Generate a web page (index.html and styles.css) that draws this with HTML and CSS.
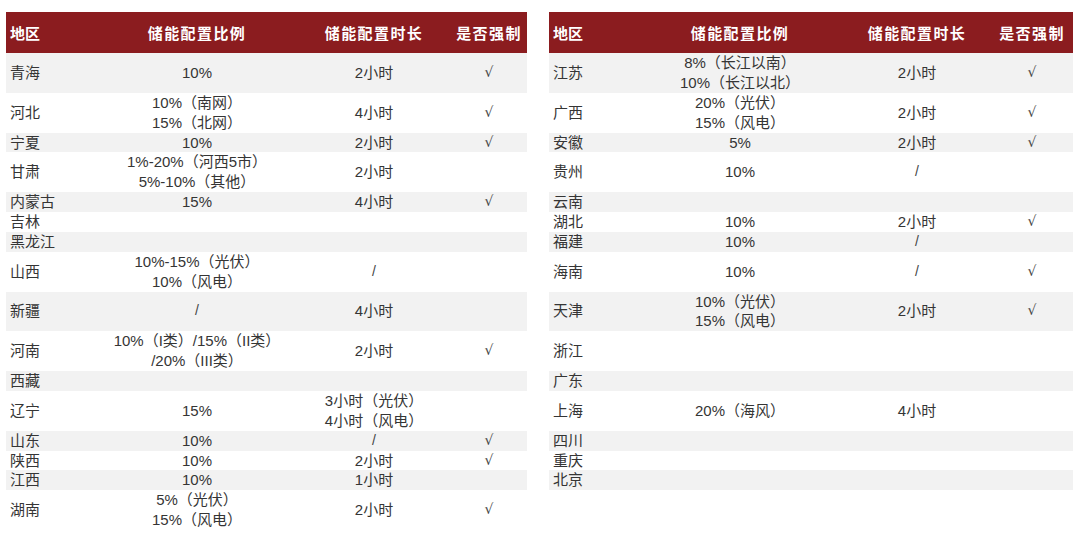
FILE: index.html
```html
<!DOCTYPE html>
<html lang="zh-CN">
<head>
<meta charset="utf-8">
<title>储能配置</title>
<link rel="stylesheet" href="styles.css">
</head>
<body>
<div class="page">
  <table class="tbl tbl-left">
    <colgroup>
      <col class="lc1"><col class="lc2"><col class="lc3"><col class="lc4">
    </colgroup>
    <thead>
      <tr><th class="first">地区</th><th>储能配置比例</th><th>储能配置时长</th><th>是否强制</th></tr>
    </thead>
    <tbody>
      <tr class="t"><td class="first">青海</td><td>10%</td><td>2小时</td><td class="ck">√</td></tr>
      <tr class="t"><td class="first">河北</td><td>10%（南网）<br>15%（北网）</td><td>4小时</td><td class="ck">√</td></tr>
      <tr class="s"><td class="first">宁夏</td><td>10%</td><td>2小时</td><td class="ck">√</td></tr>
      <tr class="t"><td class="first">甘肃</td><td>1%-20%（河西5市）<br>5%-10%（其他）</td><td>2小时</td><td class="ck"></td></tr>
      <tr class="s"><td class="first">内蒙古</td><td>15%</td><td>4小时</td><td class="ck">√</td></tr>
      <tr class="s"><td class="first">吉林</td><td></td><td></td><td class="ck"></td></tr>
      <tr class="s"><td class="first">黑龙江</td><td></td><td></td><td class="ck"></td></tr>
      <tr class="t"><td class="first">山西</td><td>10%-15%（光伏）<br>10%（风电）</td><td class="sl">/</td><td class="ck"></td></tr>
      <tr class="t"><td class="first">新疆</td><td class="sl">/</td><td>4小时</td><td class="ck"></td></tr>
      <tr class="t"><td class="first">河南</td><td>10%（I类）/15%（II类）<br>/20%（III类）</td><td>2小时</td><td class="ck">√</td></tr>
      <tr class="s"><td class="first">西藏</td><td></td><td></td><td class="ck"></td></tr>
      <tr class="t"><td class="first">辽宁</td><td>15%</td><td>3小时（光伏）<br>4小时（风电）</td><td class="ck"></td></tr>
      <tr class="s"><td class="first">山东</td><td>10%</td><td class="sl">/</td><td class="ck">√</td></tr>
      <tr class="s"><td class="first">陕西</td><td>10%</td><td>2小时</td><td class="ck">√</td></tr>
      <tr class="s"><td class="first">江西</td><td>10%</td><td>1小时</td><td class="ck"></td></tr>
      <tr class="t"><td class="first">湖南</td><td>5%（光伏）<br>15%（风电）</td><td>2小时</td><td class="ck">√</td></tr>
    </tbody>
  </table>

  <table class="tbl tbl-right">
    <colgroup>
      <col class="rc1"><col class="rc2"><col class="rc3"><col class="rc4">
    </colgroup>
    <thead>
      <tr><th class="first">地区</th><th>储能配置比例</th><th>储能配置时长</th><th>是否强制</th></tr>
    </thead>
    <tbody>
      <tr class="t"><td class="first">江苏</td><td>8%（长江以南）<br>10%（长江以北）</td><td>2小时</td><td class="ck">√</td></tr>
      <tr class="t"><td class="first">广西</td><td>20%（光伏）<br>15%（风电）</td><td>2小时</td><td class="ck">√</td></tr>
      <tr class="s"><td class="first">安徽</td><td>5%</td><td>2小时</td><td class="ck">√</td></tr>
      <tr class="t"><td class="first">贵州</td><td>10%</td><td class="sl">/</td><td class="ck"></td></tr>
      <tr class="s"><td class="first">云南</td><td></td><td></td><td class="ck"></td></tr>
      <tr class="s"><td class="first">湖北</td><td>10%</td><td>2小时</td><td class="ck">√</td></tr>
      <tr class="s"><td class="first">福建</td><td>10%</td><td class="sl">/</td><td class="ck"></td></tr>
      <tr class="t"><td class="first">海南</td><td>10%</td><td class="sl">/</td><td class="ck">√</td></tr>
      <tr class="t"><td class="first">天津</td><td>10%（光伏）<br>15%（风电）</td><td>2小时</td><td class="ck">√</td></tr>
      <tr class="t"><td class="first">浙江</td><td></td><td></td><td class="ck"></td></tr>
      <tr class="s"><td class="first">广东</td><td></td><td></td><td class="ck"></td></tr>
      <tr class="t"><td class="first">上海</td><td>20%（海风）</td><td>4小时</td><td class="ck"></td></tr>
      <tr class="s"><td class="first">四川</td><td></td><td></td><td class="ck"></td></tr>
      <tr class="s"><td class="first">重庆</td><td></td><td></td><td class="ck"></td></tr>
      <tr class="s"><td class="first">北京</td><td></td><td></td><td class="ck"></td></tr>
    </tbody>
  </table>
</div>
</body>
</html>
```

FILE: styles.css
```css
html, body {
  margin: 0;
  padding: 0;
  background: #ffffff;
}

.page {
  display: flex;
  align-items: flex-start;
  gap: 22px;
  padding: 12px 0 0 6px;
  font-family: "Liberation Sans", "Noto Sans CJK SC", sans-serif;
  color: #353535;
}

.tbl {
  border-collapse: collapse;
  table-layout: fixed;
  border-spacing: 0;
}

.tbl-left { width: 521px; }
.tbl-right { width: 524px; }

.lc1 { width: 91px; }
.lc2 { width: 200px; }
.lc3 { width: 154px; }
.lc4 { width: 76px; }

.rc1 { width: 88px; }
.rc2 { width: 206px; }
.rc3 { width: 148px; }
.rc4 { width: 82px; }

.tbl th {
  background: #8b1c1f;
  color: #ffffff;
  height: 41px;
  padding: 0;
  font-size: 15px;
  font-weight: bold;
  letter-spacing: 1.4px;
  text-align: center;
  vertical-align: middle;
  font-family: "Noto Sans CJK SC", "Liberation Sans", sans-serif;
}

.tbl th.first {
  text-align: left;
  padding-left: 4px;
  letter-spacing: 0;
}

.tbl td {
  padding: 0;
  font-size: 15px;
  line-height: 19.875px;
  text-align: center;
  vertical-align: middle;
  white-space: nowrap;
}

.tbl td.first {
  text-align: left;
  padding-left: 4px;
}

.tbl tr.t td { height: 39.75px; }
.tbl tr.s td { height: 19.875px; }

.tbl tbody tr:nth-child(odd) td { background: #f2f2f2; }

.tbl td.ck {
  font-family: "DejaVu Sans", sans-serif;
  font-size: 14px;
  color: #444444;
}

.tbl td.sl {
  font-size: 14px;
  color: #444444;
}
```
